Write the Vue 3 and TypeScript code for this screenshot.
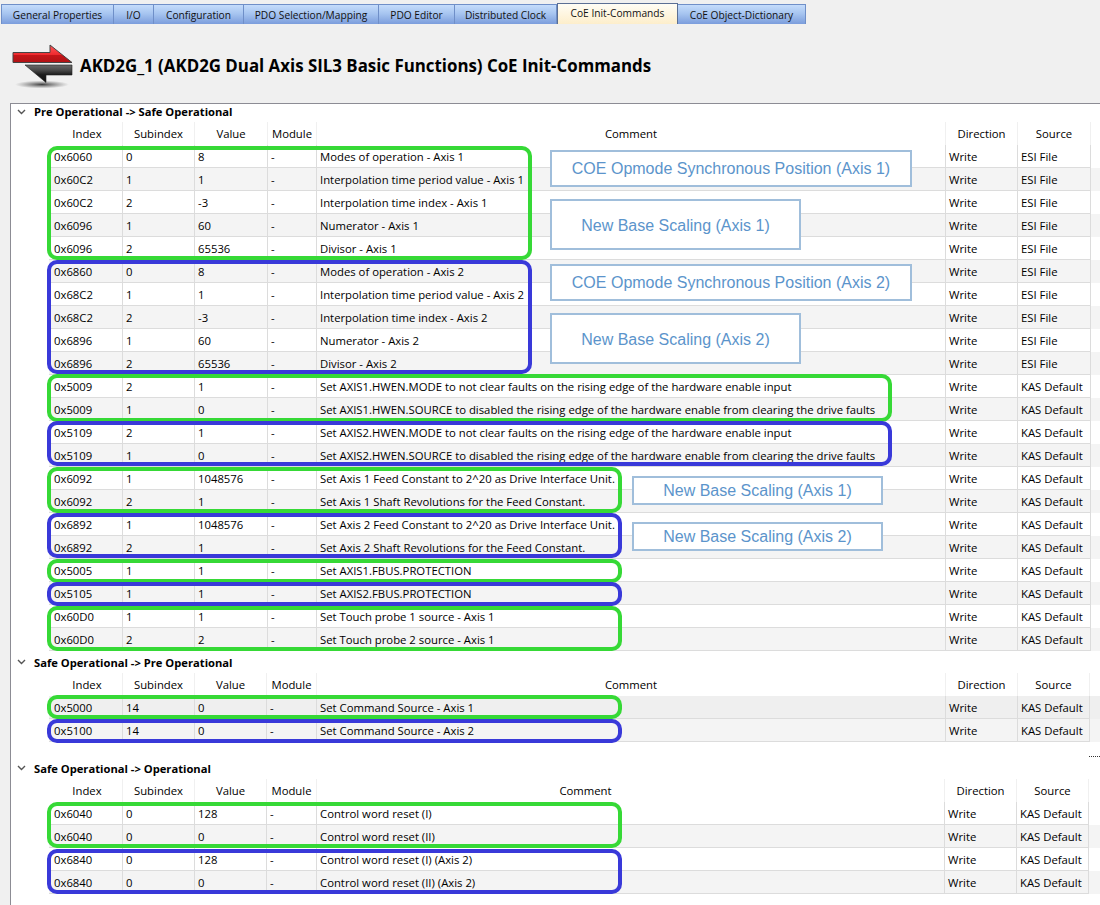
<script setup lang="ts">
type Row = [string, string, string, string, string, string]

const tabs = [
  { label: 'General Properties', w: 113 },
  { label: 'I/O', w: 40 },
  { label: 'Configuration', w: 90 },
  { label: 'PDO Selection/Mapping', w: 135 },
  { label: 'PDO Editor', w: 76 },
  { label: 'Distributed Clock', w: 102 },
  { label: 'CoE Init-Commands', w: 121, active: true },
  { label: 'CoE Object-Dictionary', w: 128 },
]

const esi = 'ESI File'
const kas = 'KAS Default'

const r = (i: string, s: string, v: string, c: string, src: string): Row => [i, s, v, c, 'Write', src]

const first: Row[] = [
  r('0x6060', '0', '8', 'Modes of operation - Axis 1', esi),
  r('0x60C2', '1', '1', 'Interpolation time period value - Axis 1', esi),
  r('0x60C2', '2', '-3', 'Interpolation time index - Axis 1', esi),
  r('0x6096', '1', '60', 'Numerator - Axis 1', esi),
  r('0x6096', '2', '65536', 'Divisor - Axis 1', esi),
  r('0x6860', '0', '8', 'Modes of operation - Axis 2', esi),
  r('0x68C2', '1', '1', 'Interpolation time period value - Axis 2', esi),
  r('0x68C2', '2', '-3', 'Interpolation time index - Axis 2', esi),
  r('0x6896', '1', '60', 'Numerator - Axis 2', esi),
  r('0x6896', '2', '65536', 'Divisor - Axis 2', esi),
  r('0x5009', '2', '1', 'Set AXIS1.HWEN.MODE to not clear faults on the rising edge of the hardware enable input', kas),
  r('0x5009', '1', '0', 'Set AXIS1.HWEN.SOURCE to disabled the rising edge of the hardware enable from clearing the drive faults', kas),
  r('0x5109', '2', '1', 'Set AXIS2.HWEN.MODE to not clear faults on the rising edge of the hardware enable input', kas),
  r('0x5109', '1', '0', 'Set AXIS2.HWEN.SOURCE to disabled the rising edge of the hardware enable from clearing the drive faults', kas),
  r('0x6092', '1', '1048576', 'Set Axis 1 Feed Constant to 2^20 as Drive Interface Unit.', kas),
  r('0x6092', '2', '1', 'Set Axis 1 Shaft Revolutions for the Feed Constant.', kas),
  r('0x6892', '1', '1048576', 'Set Axis 2 Feed Constant to 2^20 as Drive Interface Unit.', kas),
  r('0x6892', '2', '1', 'Set Axis 2 Shaft Revolutions for the Feed Constant.', kas),
  r('0x5005', '1', '1', 'Set AXIS1.FBUS.PROTECTION', kas),
  r('0x5105', '1', '1', 'Set AXIS2.FBUS.PROTECTION', kas),
  r('0x60D0', '1', '1', 'Set Touch probe 1 source - Axis 1', kas),
  r('0x60D0', '2', '2', 'Set Touch probe 2 source - Axis 1', kas),
]

const second: Row[] = [
  r('0x5000', '14', '0', 'Set Command Source - Axis 1', kas),
  r('0x5100', '14', '0', 'Set Command Source - Axis 2', kas),
]

const third: Row[] = [
  r('0x6040', '0', '128', 'Control word reset (I)', kas),
  r('0x6040', '0', '0', 'Control word reset (II)', kas),
  r('0x6840', '0', '128', 'Control word reset (I) (Axis 2)', kas),
  r('0x6840', '0', '0', 'Control word reset (II) (Axis 2)', kas),
]

const sections = [
  { title: 'Pre Operational -> Safe Operational', rows: first, cls: 's1' },
  { title: 'Safe Operational -> Pre Operational', rows: second, cls: 's2' },
  { title: 'Safe Operational -> Operational', rows: third, cls: 's3' },
]

const heads = ['Index', 'Subindex', 'Value', 'Module', 'Comment', 'Direction', 'Source']

// Hand-drawn highlight frames that lie over the tables: [left, top, right, bottom, kind]
const frames: [number, number, number, number, string][] = [
  [47, 146, 532, 260, 'g'],
  [47, 260, 532, 374, 'b'],
  [47, 374, 892, 422, 'g'],
  [47, 421, 892, 466, 'b'],
  [47, 467, 622, 513, 'g'],
  [47, 513, 622, 558, 'b'],
  [47, 559, 622, 583, 'g'],
  [47, 582, 622, 606, 'b'],
  [47, 606, 622, 651, 'g'],
  [47, 695, 622, 719, 'g'],
  [47, 719, 622, 743, 'b'],
  [47, 802, 622, 848, 'g'],
  [47, 849, 622, 894, 'b'],
]

const notes: [number, number, number, number, string][] = [
  [550, 150, 912, 187, 'COE Opmode Synchronous Position (Axis 1)'],
  [550, 199, 801, 250, 'New Base Scaling (Axis 1)'],
  [550, 264, 912, 301, 'COE Opmode Synchronous Position (Axis 2)'],
  [550, 313, 801, 364, 'New Base Scaling (Axis 2)'],
  [632, 476, 883, 505, 'New Base Scaling (Axis 1)'],
  [632, 522, 883, 551, 'New Base Scaling (Axis 2)'],
]

const box = (a: number, b: number, c: number, d: number) => ({
  left: `${a}px`,
  top: `${b}px`,
  width: `${c - a}px`,
  height: `${d - b}px`,
})
</script>

<template>
  <div class="page">
    <nav class="tabs">
      <div
        v-for="t in tabs"
        :key="t.label"
        class="tab"
        :class="{ active: t.active }"
        :style="{ width: t.w + 'px' }"
      >{{ t.label }}</div>
    </nav>

    <header class="head">
      <svg class="logo" width="64" height="46" viewBox="0 0 64 46">
        <defs>
          <linearGradient id="redg" x1="0" y1="0" x2="0" y2="1">
            <stop offset="0" stop-color="#ff5a5a" />
            <stop offset="0.55" stop-color="#ee2a2e" />
            <stop offset="0.6" stop-color="#c41518" />
            <stop offset="1" stop-color="#b01214" />
          </linearGradient>
          <linearGradient id="blkg" x1="0" y1="0" x2="0" y2="1">
            <stop offset="0" stop-color="#6a6a6a" />
            <stop offset="0.3" stop-color="#484848" />
            <stop offset="0.55" stop-color="#1c1c1c" />
            <stop offset="1" stop-color="#111" />
          </linearGradient>
          <radialGradient id="shadow">
            <stop offset="0" stop-color="#222" stop-opacity="0.85" />
            <stop offset="1" stop-color="#555" stop-opacity="0" />
          </radialGradient>
        </defs>
        <ellipse cx="32" cy="40.5" rx="27" ry="4" fill="url(#shadow)" />
        <path d="M3 8.5H40V1L62 18.5H3Z" fill="url(#redg)" stroke="#444" stroke-width="1" stroke-linejoin="round" />
        <path d="M15 21H62V31H36V38.5Z" fill="url(#blkg)" stroke="#222" stroke-width="0.6" stroke-linejoin="round" />
      </svg>
      <h1>AKD2G_1 (AKD2G Dual Axis SIL3 Basic Functions) CoE Init-Commands</h1>
    </header>

    <main class="panel">
      <section v-for="s in sections" :key="s.title" class="section" :class="s.cls">
        <div class="title">
          <svg class="chev" width="9" height="6" viewBox="0 0 9 6">
            <path d="M1 1L4.5 4.5L8 1" fill="none" stroke="#555" stroke-width="1.4" />
          </svg>
          <span>{{ s.title }}</span>
        </div>
        <div class="table">
          <div class="row hd">
            <div v-for="h in heads" :key="h" class="cell" :class="'h-' + h.toLowerCase()">
              <span>{{ h }}</span>
            </div>
          </div>
          <div v-for="(row, i) in s.rows" :key="i" class="row body" :class="{ alt: i % 2 === 1, sel: s.cls === 's2' && i === 0 }">
            <div class="cell c0">{{ row[0] }}</div>
            <div class="cell">{{ row[1] }}</div>
            <div class="cell">{{ row[2] }}</div>
            <div class="cell">-</div>
            <div class="cell">{{ row[3] }}</div>
            <div class="cell">{{ row[4] }}</div>
            <div class="cell">{{ row[5] }}</div>
          </div>
        </div>
      </section>
    </main>

    <div class="dots"></div>
    <div v-for="(f, i) in frames" :key="'f' + i" class="frame" :class="f[4]" :style="box(f[0], f[1], f[2], f[3])"></div>
    <div v-for="(n, i) in notes" :key="'n' + i" class="note" :class="{ tall: n[3] - n[1] > 40 }" :style="box(n[0], n[1], n[2], n[3])">{{ n[4] }}</div>
  </div>
</template>

<style>
html, body { margin: 0; background: #f0f0f0; }
</style>

<style scoped>
.page {
  position: relative;
  width: 1100px;
  height: 905px;
  overflow: hidden;
  background: #f0f0f0;
  color: #000;
  font-family: "Open Sans", "Noto Sans", sans-serif;
  font-size: 11.32px;
}
.tabs {
  display: flex;
  height: 21px;
  padding: 3px 0 0 1px;
  align-items: flex-end;
}
.tab {
  box-sizing: border-box;
  height: 20px;
  display: flex;
  align-items: center;
  justify-content: center;
  font-size: 10.2px;
  color: #111;
  border: 1px solid #6f8fc8;
  border-left-width: 0;
  border-bottom: 0;
  background: linear-gradient(#c5dcfb, #a7c5f0 45%, #7b9ddc);
}
.tab:first-child { border-left-width: 1px; }
.tab.active {
  height: 21px;
  padding-bottom: 2px;
  border-color: #5b6f94;
  border-left-width: 1px;
  background: linear-gradient(#fffdf5, #fdeecb);
}
.head {
  display: flex;
  align-items: center;
  height: 79px;
  padding-left: 10px;
  gap: 6px;
}
.logo { margin-top: 6px; }
.head h1 {
  margin: 4px 0 0;
  font-size: 16.87px;
  font-weight: 700;
  white-space: nowrap;
  color: #000;
}
.panel {
  margin-left: 10px;
  height: 802px;
  background: #fff;
  border-left: 1px solid #8c8c94;
  border-top: 1px solid #8c8c94;
}
.title {
  display: flex;
  align-items: center;
  height: 22px;
  padding-left: 5px;
  gap: 8px;
  font-weight: 700;
  font-size: 11.2px;
}
.s1 .title { box-sizing: border-box; height: 18px; padding-bottom: 3px; }
.s3 { margin-top: 15px; }
.chev { flex: none; margin-left: 1px; }
.table { margin-left: 38px; }
.row {
  display: grid;
  height: 23px;
}
.s1 .row { grid-template-columns: 74px 72px 73px 49px 629px 72px 73px; }
.s2 .row { grid-template-columns: 74px 72px 72px 50px 629px 72px 72px; }
.s3 .row { grid-template-columns: 74px 72px 72px 50px 628px 72px 72px; }
.cell {
  box-sizing: border-box;
  display: flex;
  align-items: center;
  padding-left: 3px;
  white-space: nowrap;
  overflow: hidden;
  border-right: 1px solid #dcdcdc;
}
.c0 { padding-left: 5px; }
.row.body .cell { border-bottom: 1px solid #dcdcdc; }
.row.alt { background: #f4f4f4; }
.row.sel { background: #efefef; }
.row.hd .cell {
  justify-content: center;
  padding: 0;
  border-right-color: #f0f0f0;
}
.row.hd .h-index { padding-left: 3px; }
.s3 .row.hd .h-comment { padding-right: 90px; }
.frame {
  position: absolute;
  box-sizing: border-box;
  border: 4px solid;
  border-radius: 10px;
}
.frame.g { border-color: #36d936; }
.frame.b { border-color: #3939d9; }
.note {
  position: absolute;
  box-sizing: border-box;
  display: flex;
  align-items: center;
  justify-content: center;
  background: #fff;
  border: 2px solid #a0bedb;
  font-family: "Liberation Sans", Arial, sans-serif;
  font-size: 16px;
  color: #5b94cb;
  white-space: nowrap;
}
.note.tall { padding-top: 2px; }
.dots {
  position: absolute;
  left: 1089px;
  top: 756px;
  width: 11px;
  border-top: 1px dotted #333;
}
</style>
